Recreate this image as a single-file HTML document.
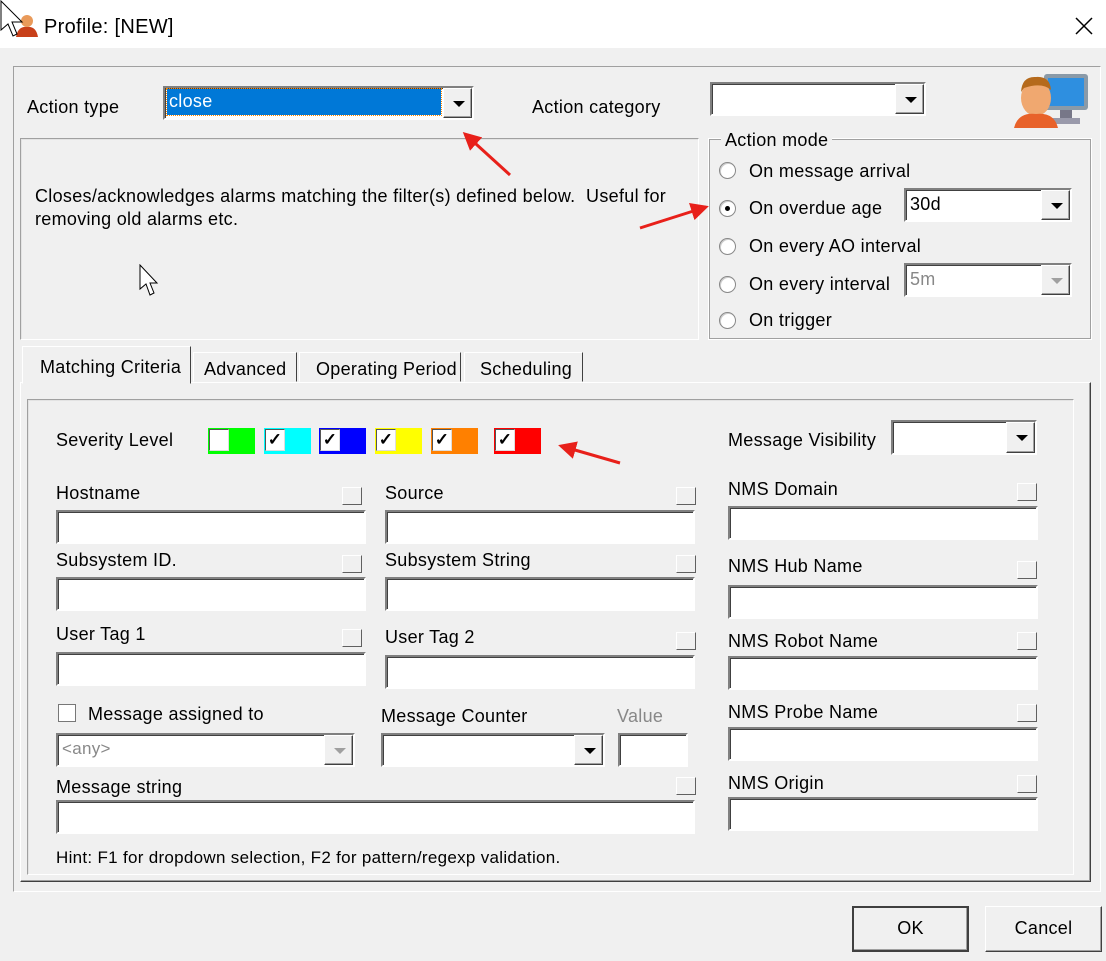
<!DOCTYPE html><html><head><style>
*{box-sizing:border-box}
body{margin:0;width:1106px;height:961px;background:#f0f0f0;font-family:"Liberation Sans",sans-serif;font-size:18px;letter-spacing:0.3px;color:#000;position:relative;overflow:hidden}
.a{position:absolute}
.t{position:absolute;white-space:nowrap;line-height:20px}
.in{position:absolute;background:#fff;border:2px solid;border-color:#808080 #fff #fff #808080;box-shadow:inset 1px 1px 0 #404040}
.sunk{position:absolute;border:1px solid;border-color:#a0a0a0 #fff #fff #a0a0a0;box-shadow:inset 1px 1px 0 #e3e3e3}
.btn{position:absolute;background:#f0f0f0;border:1px solid;border-color:#fff #404040 #404040 #fff;box-shadow:inset -1px -1px 0 #a0a0a0}
.dd{position:absolute;right:0;top:0;bottom:0;width:29px;background:#f0f0f0;border:1px solid;border-color:#fff #404040 #404040 #fff;box-shadow:inset -1px -1px 0 #a0a0a0}
.dd:after{content:"";position:absolute;left:9px;top:12px;border:6px solid transparent;border-top:6px solid #000;border-bottom:0}
.dd.g:after{border-top-color:#a0a0a0}
.sb{position:absolute;width:20px;height:18px;background:#f0f0f0;border:1px solid;border-color:#fff #606060 #606060 #fff}
.r{position:absolute;width:17px;height:17px;border-radius:50%;background:#fff;border:1px solid #888;box-shadow:inset 1px 1px 0 #ccc}
.sev{position:absolute;width:47px;height:26px;top:428px}
.sev i{position:absolute;left:1px;top:1px;width:20px;height:22px;background:#fff;border:1px solid;border-color:#555 #ddd #ddd #555;font-style:normal;font-size:17px;line-height:20px;text-align:center;font-weight:bold}
</style></head><body>
<div class="a" style="left:0;top:0;width:1106px;height:48px;background:#fff"></div>
<svg class="a" style="left:14px;top:12px" width="26" height="26"><circle cx="13" cy="9" r="6" fill="#e99a5a"/><path d="M2 25 Q4 14 13 15 Q22 14 24 25Z" fill="#c8401a"/></svg>
<div class="t" style="left:44px;top:17px;font-size:20px">Profile: [NEW]</div>
<svg class="a" style="left:1074px;top:16px" width="20" height="20"><path d="M2 2L18 18M18 2L2 18" stroke="#000" stroke-width="1.5"/></svg>
<svg class="a" style="left:0;top:0" width="32" height="40"><path d="M1 1L1 30L8 24L13 36L17 34L12 22L22 22Z" fill="#fff" stroke="#000"/></svg>
<div class="a" style="left:13px;top:66px;width:1088px;height:826px;border:1px solid;border-color:#a0a0a0 #fff #fff #a0a0a0"></div>
<div class="t" style="left:27px;top:97px">Action type</div>
<div class="in" style="left:163px;top:86px;width:311px;height:34px"><div class="a" style="left:2px;top:1px;width:274px;height:26px;background:#0078d7;outline:1px dotted #f80;color:#fff;padding-left:2px;line-height:24px">close</div><div class="dd"></div></div>
<div class="t" style="left:532px;top:97px">Action category</div>
<div class="in" style="left:710px;top:82px;width:216px;height:34px"><div class="dd"></div></div>
<svg class="a" style="left:1012px;top:68px" width="80" height="62"><rect x="32" y="6" width="44" height="36" rx="3" fill="#8a9aa8"/><rect x="36" y="10" width="36" height="28" fill="#2e8fe0"/><rect x="48" y="42" width="12" height="10" fill="#778"/><rect x="40" y="50" width="28" height="6" fill="#99a"/><ellipse cx="24" cy="30" rx="15" ry="18" fill="#f0a870"/><path d="M9 24 Q10 8 24 9 Q38 8 39 22 Q30 14 12 20Z" fill="#b56a1c"/><path d="M2 60 Q6 44 24 46 Q42 44 46 60Z" fill="#e8622a"/></svg>
<div class="sunk" style="left:20px;top:138px;width:679px;height:202px"></div>
<div class="t" style="left:35px;top:186px">Closes/acknowledges alarms matching the filter(s) defined below.&nbsp; Useful for</div>
<div class="t" style="left:35px;top:209px">removing old alarms etc.</div>
<svg class="a" style="left:139px;top:264px" width="24" height="34"><path d="M1 1L1 25L7 20L11 31L15 29L11 19L18 19Z" fill="#fff" stroke="#000"/></svg>
<div class="a" style="left:709px;top:139px;width:382px;height:200px;border:1px solid #a0a0a0;outline:1px solid #fff;outline-offset:0"></div>
<div class="t" style="left:721px;top:130px;background:#f0f0f0;padding:0 4px">Action mode</div>
<div class="r" style="left:719px;top:162px"></div><div class="t" style="left:749px;top:161px">On message arrival</div>
<div class="r" style="left:719px;top:200px"><div class="a" style="left:5px;top:5px;width:5px;height:5px;border-radius:50%;background:#000"></div></div><div class="t" style="left:749px;top:198px">On overdue age</div>
<div class="in" style="left:904px;top:188px;width:168px;height:34px;padding-left:4px;line-height:28px">30d<div class="dd"></div></div>
<div class="r" style="left:719px;top:238px"></div><div class="t" style="left:749px;top:236px">On every AO interval</div>
<div class="r" style="left:719px;top:276px"></div><div class="t" style="left:749px;top:274px">On every interval</div>
<div class="in" style="left:904px;top:263px;width:168px;height:34px;padding-left:4px;line-height:28px;color:#888;background:#fff">5m<div class="dd g"></div></div>
<div class="r" style="left:719px;top:312px"></div><div class="t" style="left:749px;top:310px">On trigger</div>
<div class="a" style="left:20px;top:382px;width:1071px;height:500px;border:1px solid;border-color:#fff #404040 #404040 #fff;box-shadow:inset -1px -1px 0 #a0a0a0"></div>
<div class="a" style="left:22px;top:346px;width:169px;height:38px;background:#f0f0f0;border:1px solid;border-color:#fff #404040 transparent #fff"></div>
<div class="t" style="left:40px;top:357px">Matching Criteria</div>
<div class="a" style="left:193px;top:352px;width:104px;height:30px;border:1px solid;border-color:#fff #404040 transparent #fff"></div><div class="t" style="left:204px;top:359px">Advanced</div>
<div class="a" style="left:299px;top:352px;width:162px;height:30px;border:1px solid;border-color:#fff #404040 transparent #fff"></div><div class="t" style="left:316px;top:359px">Operating Period</div>
<div class="a" style="left:464px;top:352px;width:119px;height:30px;border:1px solid;border-color:#fff #404040 transparent #fff"></div><div class="t" style="left:480px;top:359px">Scheduling</div>
<div class="sunk" style="left:27px;top:399px;width:1047px;height:476px"></div>
<div class="t" style="left:56px;top:430px">Severity Level</div>
<div class="sev" style="left:208px;background:#0f0"><i></i></div>
<div class="sev" style="left:264px;background:#0ff"><i>✓</i></div>
<div class="sev" style="left:319px;background:#00f"><i>✓</i></div>
<div class="sev" style="left:375px;background:#ff0"><i>✓</i></div>
<div class="sev" style="left:431px;background:#ff8000"><i>✓</i></div>
<div class="sev" style="left:494px;background:#f00"><i>✓</i></div>
<div class="t" style="left:56px;top:483px">Hostname</div><div class="sb" style="left:342px;top:487px"></div><div class="in" style="left:56px;top:510px;width:310px;height:34px"></div>
<div class="t" style="left:385px;top:483px">Source</div><div class="sb" style="left:676px;top:487px"></div><div class="in" style="left:385px;top:510px;width:310px;height:34px"></div>
<div class="t" style="left:56px;top:550px">Subsystem ID.</div><div class="sb" style="left:342px;top:555px"></div><div class="in" style="left:56px;top:577px;width:310px;height:34px"></div>
<div class="t" style="left:385px;top:550px">Subsystem String</div><div class="sb" style="left:676px;top:555px"></div><div class="in" style="left:385px;top:577px;width:310px;height:34px"></div>
<div class="t" style="left:56px;top:624px">User Tag 1</div><div class="sb" style="left:342px;top:629px"></div><div class="in" style="left:56px;top:652px;width:310px;height:34px"></div>
<div class="t" style="left:385px;top:627px">User Tag 2</div><div class="sb" style="left:676px;top:632px"></div><div class="in" style="left:385px;top:655px;width:310px;height:34px"></div>
<div class="a" style="left:58px;top:704px;width:18px;height:18px;background:#fff;border:1px solid #777"></div>
<div class="t" style="left:88px;top:704px">Message assigned to</div>
<div class="in" style="left:56px;top:733px;width:299px;height:34px;color:#888;padding-left:4px;line-height:28px;font-size:17px">&lt;any&gt;<div class="dd g"></div></div>
<div class="t" style="left:381px;top:706px">Message Counter</div>
<div class="t" style="left:617px;top:706px;color:#888">Value</div>
<div class="in" style="left:381px;top:733px;width:224px;height:34px"><div class="dd"></div></div>
<div class="in" style="left:618px;top:733px;width:70px;height:34px"></div>
<div class="t" style="left:56px;top:777px">Message string</div><div class="sb" style="left:676px;top:777px"></div>
<div class="in" style="left:56px;top:800px;width:639px;height:34px"></div>
<div class="t" style="left:56px;top:848px;font-size:17px">Hint: F1 for dropdown selection, F2 for pattern/regexp validation.</div>
<div class="t" style="left:728px;top:430px">Message Visibility</div>
<div class="in" style="left:891px;top:420px;width:146px;height:35px"><div class="dd"></div></div>
<div class="t" style="left:728px;top:479px">NMS Domain</div><div class="sb" style="left:1017px;top:483px"></div><div class="in" style="left:728px;top:506px;width:310px;height:34px"></div>
<div class="t" style="left:728px;top:556px">NMS Hub Name</div><div class="sb" style="left:1017px;top:561px"></div><div class="in" style="left:728px;top:585px;width:310px;height:34px"></div>
<div class="t" style="left:728px;top:631px">NMS Robot Name</div><div class="sb" style="left:1017px;top:632px"></div><div class="in" style="left:728px;top:656px;width:310px;height:34px"></div>
<div class="t" style="left:728px;top:702px">NMS Probe Name</div><div class="sb" style="left:1017px;top:704px"></div><div class="in" style="left:728px;top:727px;width:310px;height:34px"></div>
<div class="t" style="left:728px;top:773px">NMS Origin</div><div class="sb" style="left:1017px;top:775px"></div><div class="in" style="left:728px;top:797px;width:310px;height:34px"></div>
<div class="btn" style="left:852px;top:906px;width:117px;height:46px;border:2px solid #404040;text-align:center;line-height:40px">OK</div>
<div class="btn" style="left:985px;top:906px;width:117px;height:46px;text-align:center;line-height:42px">Cancel</div>
<svg class="a" style="left:0;top:0;pointer-events:none" width="1106" height="961"><defs><marker id="m" markerWidth="6" markerHeight="6" refX="5" refY="3" orient="auto"><path d="M0 0L6 3L0 6Z" fill="#e8201a"/></marker></defs>
<g stroke="#e8201a" stroke-width="3" fill="none" marker-end="url(#m)"><path d="M510 175L465 134"/><path d="M640 228L706 207"/><path d="M620 463L561 446"/></g></svg>
</body></html>
